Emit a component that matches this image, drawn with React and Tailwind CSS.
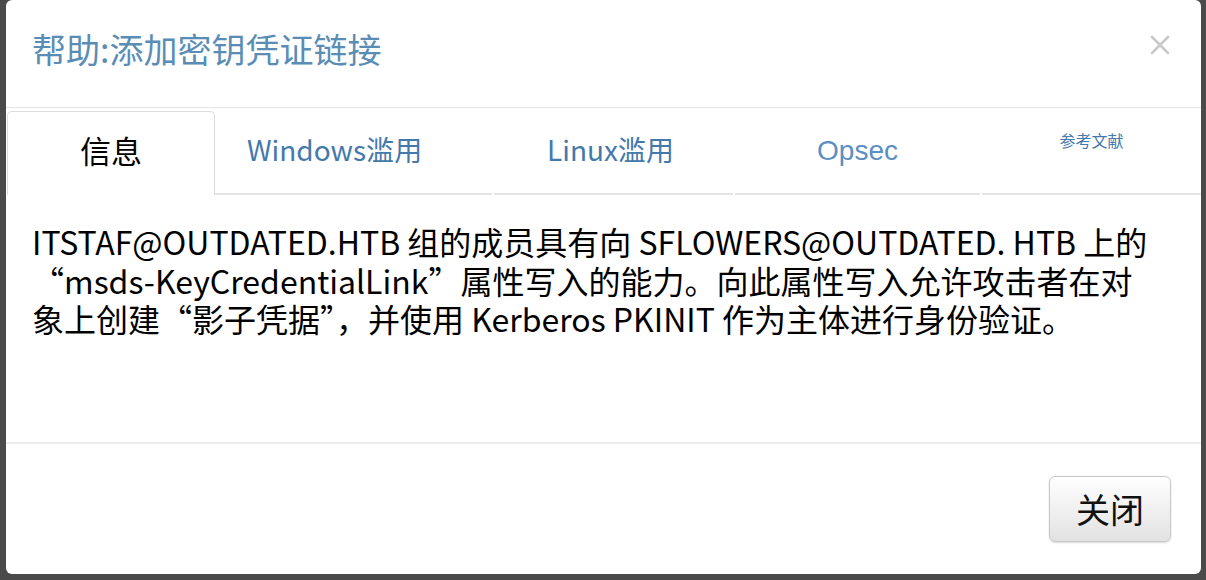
import React from "react";

const F = { fontFamily: '"Noto Sans CJK SC", "Noto Sans", sans-serif' };

export default function App() {
  return (
    <div className="w-[1206px] h-[580px] bg-[#4a4a4a] pl-[6px] pr-[5px] pb-[6px] flex" style={F}>
      <div className="flex-1 bg-white rounded-[6px] flex flex-col overflow-hidden">
        {/* header */}
        <div className="h-[108px] border-b border-[#e5e5e5] flex items-start justify-between pl-[26px] pr-[30px] pt-[24px] shrink-0">
          <div className="text-[34px] leading-[50px] text-[#5a8db5]">帮助:添加密钥凭证链接</div>
          <svg width="22" height="22" viewBox="0 0 22 22" className="mt-[10px]">
            <path d="M3 3 L19 19 M19 3 L3 19" stroke="#c9c9c9" strokeWidth="2.6" strokeLinecap="round" />
          </svg>
        </div>
        {/* tabs */}
        <div className="flex h-[84px] mt-[3px] pl-[1px] shrink-0">
          <div className="w-[208px] border border-b-0 border-[#dddddd] rounded-t-[5px] flex items-center justify-center pb-[6px] text-[31px] text-black">
            信息
          </div>
          <div className="w-[277px] border-b-2 border-[#e3e3e3] flex items-center pl-[32px] pb-[6px] text-[28px] text-[#4479ab]">
            Windows滥用
          </div>
          <div className="w-[239px] ml-[2px] border-b-2 border-[#e3e3e3] flex items-center justify-center pb-[6px] pr-[6px] text-[28px] text-[#4479ab]">
            Linux滥用
          </div>
          <div className="w-[245px] ml-[2px] border-b-2 border-[#e3e3e3] flex items-center justify-center pb-[2px] text-[28px] text-[#5b8fc2]" style={{ fontFamily: '"Liberation Sans", Arial, sans-serif' }}>
            Opsec
          </div>
          <div className="flex-1 ml-[2px] border-b-2 border-[#e3e3e3] flex items-start justify-center pt-[18px] text-[16px] leading-[22px] text-[#4479ab]">
            参考文献
          </div>
        </div>
        {/* body */}
        <div className="flex-1 border-b-2 border-[#ececec] pl-[26px] pt-[27px] text-[32px] leading-[38.5px] text-black">
          <p className="whitespace-nowrap">ITSTAF@OUTDATED.HTB 组的成员具有向 SFLOWERS@OUTDATED. HTB 上的<br />“msds-KeyCredentialLink”属性写入的能力。向此属性写入允许攻击者在对<br />象上创建“影子凭据”，并使用 Kerberos PKINIT 作为主体进行身份验证。</p>
        </div>
        {/* footer */}
        <div className="h-[130px] flex items-center justify-end pr-[30px] shrink-0">
          <button className="w-[122px] h-[66px] rounded-[6px] border border-[#c8c8c8] bg-gradient-to-b from-white to-[#e2e2e2] shadow-[0_1px_2px_rgba(0,0,0,0.15)] text-[34px] leading-none text-[#111] flex items-center justify-center">
            关闭
          </button>
        </div>
      </div>
    </div>
  );
}
